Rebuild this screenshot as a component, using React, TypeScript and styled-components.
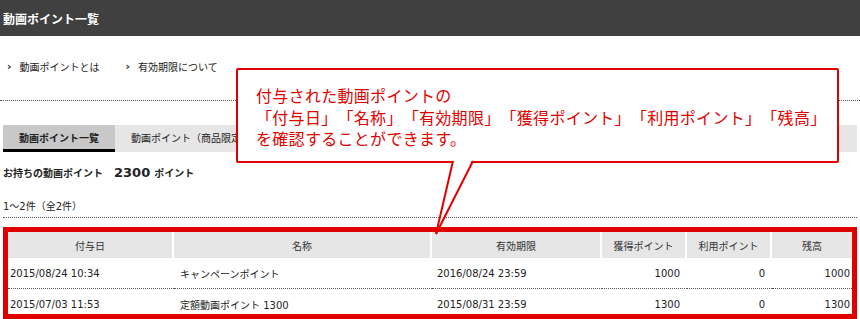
import styled, { createGlobalStyle } from 'styled-components';

const GlobalStyle = createGlobalStyle`
  html, body {
    margin: 0;
    padding: 0;
    background: #fff;
  }
  body {
    font-family: "DejaVu Sans", "Noto Sans CJK JP", sans-serif;
    color: #222;
  }
`;

const Page = styled.div`
  position: relative;
  width: 860px;
  height: 319px;
  overflow: hidden;
`;

const TitleBar = styled.div`
  height: 36px;
  background: #404040;
  display: flex;
  align-items: center;
  padding-left: 3px;
`;

const Title = styled.h1`
  margin: 0;
  font-size: 12px;
  font-weight: 700;
  color: #fff;
  font-family: "Noto Sans CJK JP", sans-serif;
`;

const LinkRow = styled.div`
  display: flex;
  align-items: center;
  gap: 26px;
  padding: 0 0 4px 7px;
  height: 64px;
  box-sizing: border-box;
`;

const HelpLink = styled.a`
  display: flex;
  align-items: center;
  gap: 8px;
  font-size: 10px;
  color: #222;
  text-decoration: none;
  &::before {
    content: '›';
    font-weight: 700;
    font-size: 11px;
  }
`;

const DottedRule = styled.hr`
  margin: 0;
  border: 0;
  border-top: 1px dotted #555;
  height: 0;
`;

const Content = styled.div`
  padding: 0 3px;
`;

const TabBar = styled.div`
  margin-top: 24px;
  display: flex;
  height: 27px;
  background: #e6e6e6;
`;

const Tab = styled.div<{ $active?: boolean }>`
  display: flex;
  align-items: center;
  padding: 0 16px;
  font-size: 10px;
  font-weight: ${(p) => (p.$active ? 700 : 400)};
  background: ${(p) => (p.$active ? '#c8c8c8' : 'transparent')};
  border-bottom: 3px solid ${(p) => (p.$active ? '#000' : 'transparent')};
  color: #222;
`;

const Balance = styled.div`
  margin-top: 13px;
  display: flex;
  align-items: baseline;
  font-weight: 700;
  font-size: 10px;
  height: 18px;
`;

const BalanceValue = styled.span`
  margin-left: 11px;
  font-size: 13px;
  margin-right: 4px;
`;

const Count = styled.div`
  margin-top: 15px;
  font-size: 10px;
  height: 19px;
`;

const Highlight = styled.div`
  margin-top: 9px;
  border: 5px solid #e00000;
  height: 92px;
  box-sizing: border-box;
  overflow: hidden;
`;

const Table = styled.table`
  width: 100%;
  border-collapse: separate;
  border-spacing: 0;
  table-layout: fixed;
  font-size: 10px;
`;

const Th = styled.th<{ $w?: number; $last?: boolean }>`
  box-sizing: border-box;
  width: ${(p) => (p.$w ? `${p.$w}px` : 'auto')};
  height: 26px;
  padding: 0;
  background: #e6e6e6;
  font-weight: 400;
  color: #333;
  text-align: center;
  border-right: ${(p) => (p.$last ? 'none' : '2px solid #fff')};
`;

const Td = styled.td<{ $align?: 'left' | 'right'; $pl?: number; $pr?: number }>`
  height: 30px;
  padding: 0 ${(p) => p.$pr ?? 7}px 0 ${(p) => p.$pl ?? 6}px;
  text-align: ${(p) => p.$align ?? 'left'};
  white-space: nowrap;
  color: #222;
`;

const Tr = styled.tr`
  & + & td {
    border-top: 1px dotted #555;
  }
`;

const Callout = styled.div`
  position: absolute;
  left: 236px;
  top: 68px;
  width: 603px;
  height: 95px;
  box-sizing: border-box;
  border: 2px solid #e00000;
  border-radius: 2px;
  background: #fff;
  padding: 15px 0 0 18px;
  color: #e00000;
  font-family: "Noto Sans CJK JP", sans-serif;
  font-size: 16px;
  line-height: 21.5px;
  letter-spacing: 0.3px;
  text-spacing-trim: space-all;
`;

const CalloutLine = styled.div`
  white-space: nowrap;
`;

const Tail = styled.svg`
  position: absolute;
  left: 430px;
  top: 160px;
`;

const columns = [
  { label: '付与日', w: 166 },
  { label: '名称', w: 258 },
  { label: '有効期限', w: 170 },
  { label: '獲得ポイント', w: 85 },
  { label: '利用ポイント', w: 85 },
  { label: '残高' },
];

const rows = [
  { date: '2015/08/24 10:34', name: 'キャンペーンポイント', expiry: '2016/08/24 23:59', got: 1000, used: 0, rest: 1000 },
  { date: '2015/07/03 11:53', name: '定額動画ポイント 1300', expiry: '2015/08/31 23:59', got: 1300, used: 0, rest: 1300 },
];

export default function App() {
  return (
    <Page>
      <GlobalStyle />
      <TitleBar>
        <Title>動画ポイント一覧</Title>
      </TitleBar>

      <LinkRow>
        <HelpLink href="#">動画ポイントとは</HelpLink>
        <HelpLink href="#">有効期限について</HelpLink>
      </LinkRow>
      <DottedRule />

      <Content>
        <TabBar>
          <Tab $active>動画ポイント一覧</Tab>
          <Tab>動画ポイント（商品限定）一覧</Tab>
        </TabBar>

        <Balance>
          お持ちの動画ポイント
          <BalanceValue>2300</BalanceValue>
          ポイント
        </Balance>

        <Count>1～2件（全2件）</Count>
        <DottedRule />

        <Highlight>
          <Table>
            <thead>
              <tr>
                {columns.map((c, i) => (
                  <Th key={c.label} $w={c.w} $last={i === columns.length - 1}>
                    {c.label}
                  </Th>
                ))}
              </tr>
            </thead>
            <tbody>
              {rows.map((r) => (
                <Tr key={r.date}>
                  <Td $pl={2}>{r.date}</Td>
                  <Td>{r.name}</Td>
                  <Td $pl={5}>{r.expiry}</Td>
                  <Td $align="right">{r.got}</Td>
                  <Td $align="right">{r.used}</Td>
                  <Td $align="right" $pr={2}>{r.rest}</Td>
                </Tr>
              ))}
            </tbody>
          </Table>
        </Highlight>
      </Content>

      <Callout>
        <CalloutLine>付与された動画ポイントの</CalloutLine>
        <CalloutLine>「付与日」「名称」「有効期限」「獲得ポイント」「利用ポイント」「残高」</CalloutLine>
        <CalloutLine>を確認することができます。</CalloutLine>
      </Callout>

      <Tail width="50" height="76" viewBox="0 0 50 76">
        <polygon points="24,0 42,0 6,74" fill="#fff" />
        <line x1="23" y1="1" x2="6" y2="74" stroke="#e00000" strokeWidth="2" />
        <line x1="43" y1="1" x2="6" y2="74" stroke="#e00000" strokeWidth="2" />
      </Tail>
    </Page>
  );
}
